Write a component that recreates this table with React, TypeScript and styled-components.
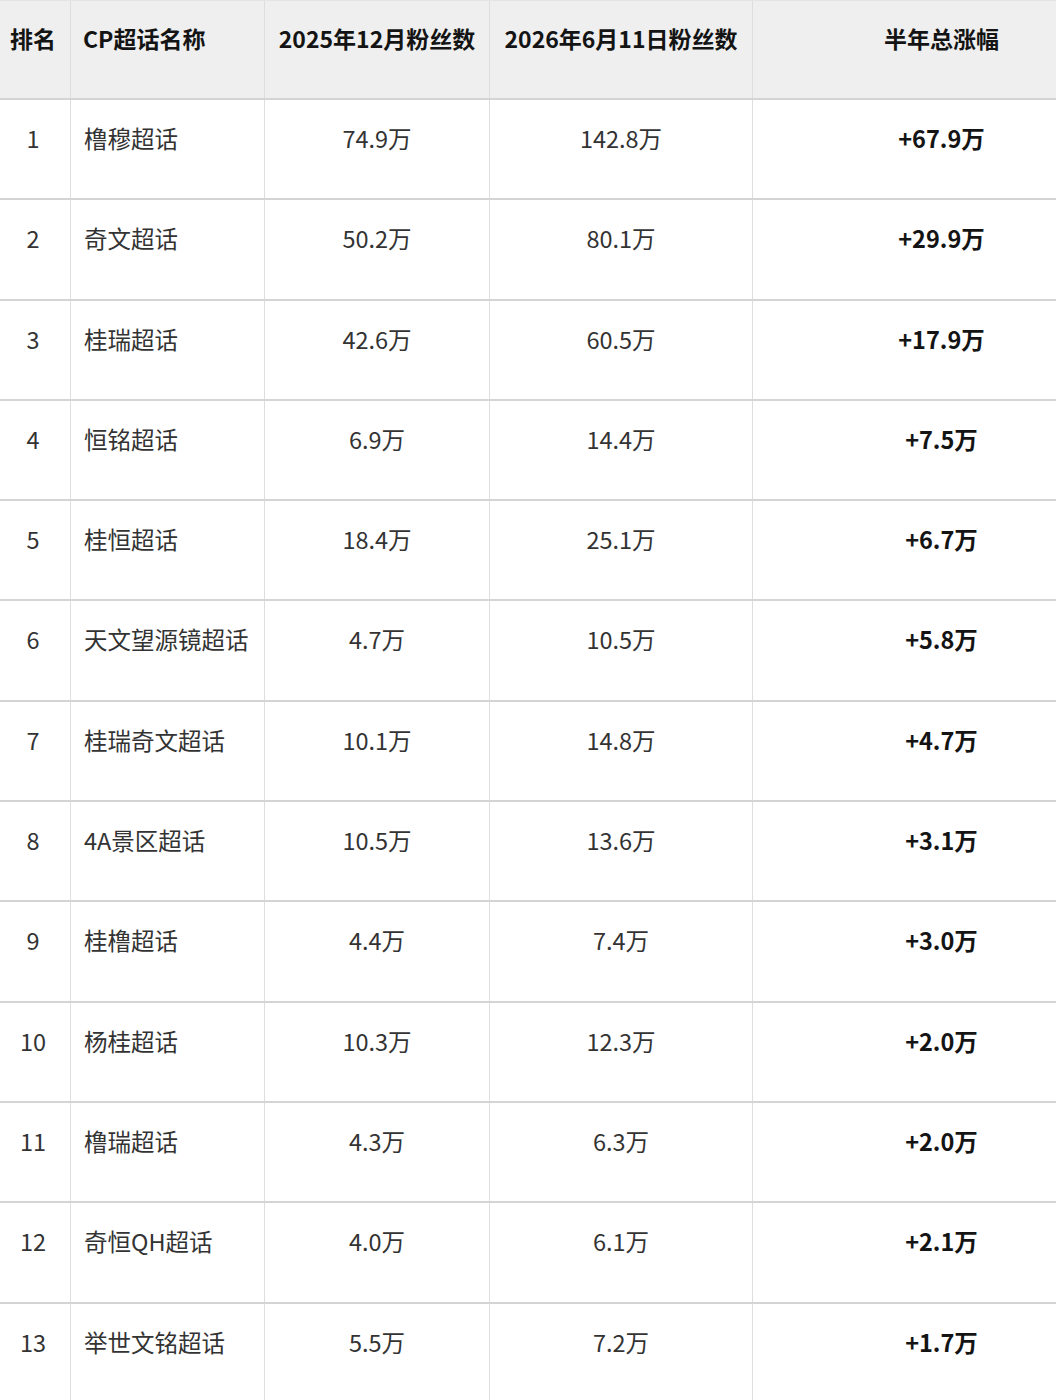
import * as React from 'react';
import styled, {createGlobalStyle} from 'styled-components';

interface FanRow {
    rank: number;
    name: string;
    before: string;
    after: string;
    growth: string;
}

const rows: FanRow[] = [
    {rank: 1, name: '橹穆超话', before: '74.9万', after: '142.8万', growth: '+67.9万'},
    {rank: 2, name: '奇文超话', before: '50.2万', after: '80.1万', growth: '+29.9万'},
    {rank: 3, name: '桂瑞超话', before: '42.6万', after: '60.5万', growth: '+17.9万'},
    {rank: 4, name: '恒铭超话', before: '6.9万', after: '14.4万', growth: '+7.5万'},
    {rank: 5, name: '桂恒超话', before: '18.4万', after: '25.1万', growth: '+6.7万'},
    {rank: 6, name: '天文望源镜超话', before: '4.7万', after: '10.5万', growth: '+5.8万'},
    {rank: 7, name: '桂瑞奇文超话', before: '10.1万', after: '14.8万', growth: '+4.7万'},
    {rank: 8, name: '4A景区超话', before: '10.5万', after: '13.6万', growth: '+3.1万'},
    {rank: 9, name: '桂橹超话', before: '4.4万', after: '7.4万', growth: '+3.0万'},
    {rank: 10, name: '杨桂超话', before: '10.3万', after: '12.3万', growth: '+2.0万'},
    {rank: 11, name: '橹瑞超话', before: '4.3万', after: '6.3万', growth: '+2.0万'},
    {rank: 12, name: '奇恒QH超话', before: '4.0万', after: '6.1万', growth: '+2.1万'},
    {rank: 13, name: '举世文铭超话', before: '5.5万', after: '7.2万', growth: '+1.7万'},
];

const GlobalStyle = createGlobalStyle`
    html, body {
        margin: 0;
        padding: 0;
        background: #ffffff;
        overflow: hidden;
    }
    body {
        font-family: "Noto Sans CJK SC", "Noto Sans", sans-serif;
        color: #2b2b2b;
    }
`;

const Page = styled.div`
    width: 1056px;
    height: 1400px;
    overflow: hidden;
`;

const Table = styled.div`
    width: 1130px;
    display: flex;
    flex-direction: column;
`;

const Row = styled.div<{ $header?: boolean }>`
    display: grid;
    grid-template-columns: 70px 194px 225px 263px 378px;
    height: ${p => (p.$header ? '97px' : '98.3px')};
    background: ${p => (p.$header ? '#efefef' : '#ffffff')};
    border-bottom: 2px solid #d4d4d4;
    border-top: ${p => (p.$header ? '1px solid #e4e4e4' : 'none')};
    box-sizing: content-box;
`;

const Cell = styled.div<{ $align?: 'left' | 'center'; $bold?: boolean; $header?: boolean }>`
    box-sizing: border-box;
    padding: ${p => (p.$header ? '20px 12px 0' : '21px 13px 0')};
    text-align: ${p => p.$align ?? 'center'};
    font-size: ${p => (p.$header ? '23px' : '23.5px')};
    line-height: 34px;
    font-weight: ${p => (p.$bold ? 700 : 400)};
    color: ${p => (p.$bold ? '#141414' : '#333333')};
    white-space: nowrap;
    border-left: 1px solid #dedede;

    &:first-child {
        border-left: none;
        padding-left: 0;
        padding-right: 4px;
    }
`;

export default function App() {
    return (
        <Page>
            <GlobalStyle/>
            <Table>
                <Row $header>
                    <Cell $header $bold>排名</Cell>
                    <Cell $header $bold $align="left">CP超话名称</Cell>
                    <Cell $header $bold>2025年12月粉丝数</Cell>
                    <Cell $header $bold>2026年6月11日粉丝数</Cell>
                    <Cell $header $bold>半年总涨幅</Cell>
                </Row>
                {rows.map(row => (
                    <Row key={row.rank}>
                        <Cell>{row.rank}</Cell>
                        <Cell $align="left">{row.name}</Cell>
                        <Cell>{row.before}</Cell>
                        <Cell>{row.after}</Cell>
                        <Cell $bold>{row.growth}</Cell>
                    </Row>
                ))}
            </Table>
        </Page>
    );
}
